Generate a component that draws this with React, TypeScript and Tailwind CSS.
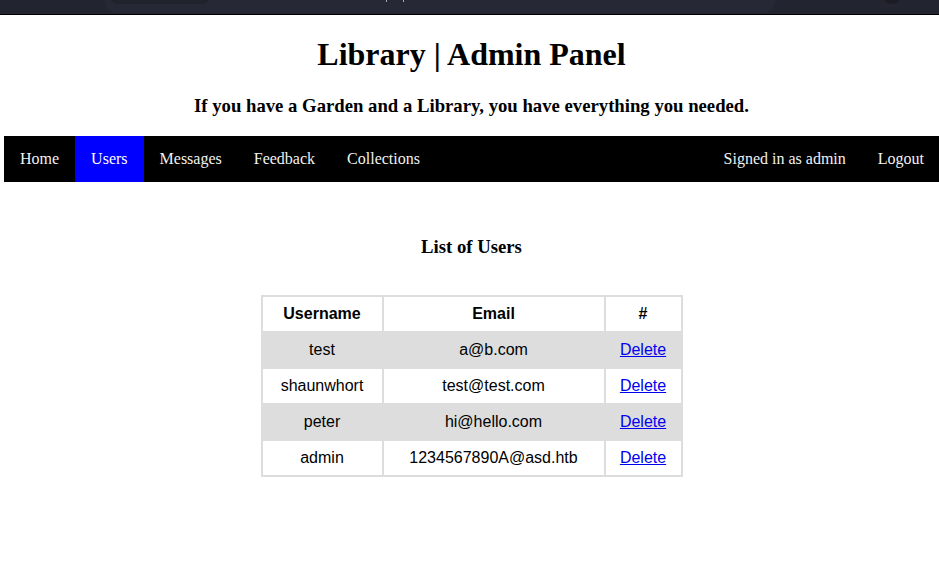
import React from "react";

const users = [
  { u: "test", e: "a@b.com" },
  { u: "shaunwhort", e: "test@test.com" },
  { u: "peter", e: "hi@hello.com" },
  { u: "admin", e: "1234567890A@asd.htb" },
];

export default function App() {
  return (
    <div className="min-h-[574px] bg-white">
      {/* browser chrome strip */}
      <div className="relative h-[15px] overflow-hidden bg-[#22242f] border-b border-black">
        <div className="absolute left-[105px] top-[-20px] h-[33px] w-[670px] rounded-[12px] bg-[#262836]" />
        <div className="absolute left-[110px] top-[-20px] h-[24px] w-[100px] rounded-[8px] bg-[#20222c]" />
        <div className="absolute left-[386px] top-0 h-[2px] w-[1px] bg-[#aaaaaa]" />
        <div className="absolute left-[403px] top-0 h-[2px] w-[1px] bg-[#aaaaaa]" />
        <div className="absolute left-[883px] top-[-14px] h-[18px] w-[18px] rounded-full bg-[#1b1c24]" />
      </div>

      <div className="pl-[4px]" style={{ fontFamily: '"Liberation Serif", serif' }}>
        <h1 className="mt-[21px] mb-0 text-center text-[32px] font-bold leading-[37px] text-black">
          Library | Admin Panel
        </h1>
        <h3 className="mt-[22px] mb-0 text-center text-[18.72px] font-bold leading-[22px] text-black">
          If you have a Garden and a Library, you have everything you needed.
        </h3>

        <nav className="mt-[19px] flex h-[46px] items-stretch bg-black text-[16px] text-[#f2f2f2]">
          <a className="flex items-center px-[16px]">Home</a>
          <a className="flex items-center bg-[#0000ff] px-[16px] text-white">Users</a>
          <a className="flex items-center px-[16px]">Messages</a>
          <a className="flex items-center px-[16px]">Feedback</a>
          <a className="flex items-center px-[16px]">Collections</a>
          <div className="flex-1" />
          <a className="flex items-center px-[16px]">Signed in as admin</a>
          <a className="flex items-center pl-[16px] pr-[15px]">Logout</a>
        </nav>

        <h3 className="mt-[54px] mb-0 text-center text-[18.72px] font-bold leading-[22px] text-black">
          List of Users
        </h3>

        <div className="mt-[37px] flex justify-center">
          <table
            className="border-separate border-spacing-[2px] bg-[#dddddd] text-[16px] text-black"
            style={{ fontFamily: '"Liberation Sans", Arial, sans-serif' }}
          >
            <thead>
              <tr>
                <th className="h-[34px] w-[119px] bg-white p-0 text-center font-bold">Username</th>
                <th className="h-[34px] w-[220px] bg-white p-0 text-center font-bold">Email</th>
                <th className="h-[34px] w-[75px] bg-white p-0 text-center font-bold">#</th>
              </tr>
            </thead>
            <tbody>
              {users.map((r, i) => {
                const bg = i % 2 === 0 ? "bg-[#dddddd]" : "bg-white";
                return (
                  <tr key={r.u}>
                    <td className={`h-[34px] p-0 text-center ${bg}`}>{r.u}</td>
                    <td className={`h-[34px] p-0 text-center ${bg}`}>{r.e}</td>
                    <td className={`h-[34px] p-0 text-center ${bg}`}>
                      <a className="cursor-pointer text-[#0000ee] underline">Delete</a>
                    </td>
                  </tr>
                );
              })}
            </tbody>
          </table>
        </div>
      </div>
    </div>
  );
}
